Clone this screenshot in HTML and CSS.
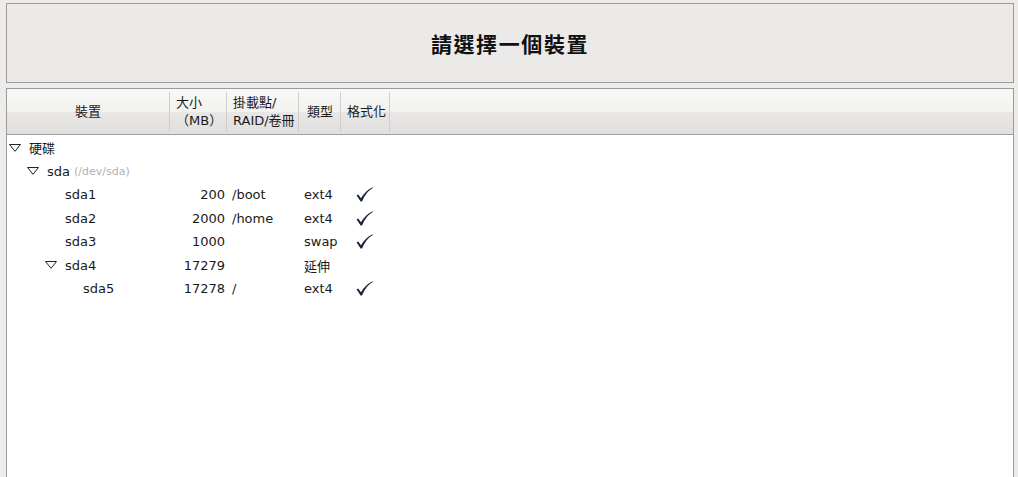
FILE: index.html
```html
<!DOCTYPE html>
<html lang="zh-Hant">
<head>
<meta charset="utf-8">
<link rel="stylesheet" href="styles.css">
</head>
<body>
<div class="title-box"><h1 class="title">請選擇一個裝置</h1></div>
<div class="panel">
  <div class="grid header">
    <div class="hcell c1 center">裝置</div>
    <div class="hcell c2">大小<br>（MB）</div>
    <div class="hcell c3">掛載點/<br>RAID/卷冊</div>
    <div class="hcell c4">類型</div>
    <div class="hcell c5">格式化</div>
    <div class="hfill"></div>
  </div>
  <div class="rows">
  <div class="grid row">
    <div class="tree l0"><span class="exp"><svg class="tri" width="12" height="8" viewBox="0 0 12 8"><polygon points="0.5,0.5 11.5,0.5 6,7.3" fill="#fff" stroke="#222" stroke-width="1"/></svg></span><span class="name">硬碟</span></div>
    <div></div><div></div><div></div><div></div><div></div>
  </div>
  <div class="grid row">
    <div class="tree l1"><span class="exp"><svg class="tri" width="12" height="8" viewBox="0 0 12 8"><polygon points="0.5,0.5 11.5,0.5 6,7.3" fill="#fff" stroke="#222" stroke-width="1"/></svg></span><span class="name">sda</span><span class="dev">(/dev/sda)</span></div>
    <div></div><div></div><div></div><div></div><div></div>
  </div>
  <div class="grid row">
    <div class="tree l2"><span class="exp"></span><span class="name">sda1</span></div>
    <div class="size">200</div><div class="mount">/boot</div><div class="type">ext4</div>
    <div class="fmt"><svg width="17" height="15" viewBox="0 0 17 15"><path d="M0.5,8.2 L2.2,7.4 L5,11.2 C7.5,6.8 11.5,2.6 16.6,0.3 L16.8,0.9 C12.2,3.6 8.8,8 6,14.4 L4.6,14.4 Z" fill="#1c2540"/></svg></div><div></div>
  </div>
  <div class="grid row">
    <div class="tree l2"><span class="exp"></span><span class="name">sda2</span></div>
    <div class="size">2000</div><div class="mount">/home</div><div class="type">ext4</div>
    <div class="fmt"><svg width="17" height="15" viewBox="0 0 17 15"><path d="M0.5,8.2 L2.2,7.4 L5,11.2 C7.5,6.8 11.5,2.6 16.6,0.3 L16.8,0.9 C12.2,3.6 8.8,8 6,14.4 L4.6,14.4 Z" fill="#1c2540"/></svg></div><div></div>
  </div>
  <div class="grid row">
    <div class="tree l2"><span class="exp"></span><span class="name">sda3</span></div>
    <div class="size">1000</div><div class="mount"></div><div class="type">swap</div>
    <div class="fmt"><svg width="17" height="15" viewBox="0 0 17 15"><path d="M0.5,8.2 L2.2,7.4 L5,11.2 C7.5,6.8 11.5,2.6 16.6,0.3 L16.8,0.9 C12.2,3.6 8.8,8 6,14.4 L4.6,14.4 Z" fill="#1c2540"/></svg></div><div></div>
  </div>
  <div class="grid row">
    <div class="tree l2"><span class="exp"><svg class="tri" width="12" height="8" viewBox="0 0 12 8"><polygon points="0.5,0.5 11.5,0.5 6,7.3" fill="#fff" stroke="#222" stroke-width="1"/></svg></span><span class="name">sda4</span></div>
    <div class="size">17279</div><div class="mount"></div><div class="type">延伸</div>
    <div class="fmt"></div><div></div>
  </div>
  <div class="grid row">
    <div class="tree l3"><span class="exp"></span><span class="name">sda5</span></div>
    <div class="size">17278</div><div class="mount">/</div><div class="type">ext4</div>
    <div class="fmt"><svg width="17" height="15" viewBox="0 0 17 15"><path d="M0.5,8.2 L2.2,7.4 L5,11.2 C7.5,6.8 11.5,2.6 16.6,0.3 L16.8,0.9 C12.2,3.6 8.8,8 6,14.4 L4.6,14.4 Z" fill="#1c2540"/></svg></div><div></div>
  </div>
  </div>
</div>
</body>
</html>
```
FILE: styles.css
```css
html, body {
  margin: 0;
  height: 100%;
  overflow: hidden;
}
body {
  background: #edeceb;
  padding: 3px 4px 0 6px;
  box-sizing: border-box;
  font-family: "DejaVu Sans", "Noto Sans CJK TC", sans-serif;
  font-size: 13px;
  color: #1a1a1a;
}
.title-box {
  height: 80px;
  box-sizing: border-box;
  border: 1px solid #9a9a9a;
  background: #ebeae8;
  display: flex;
  align-items: center;
  justify-content: center;
}
.title {
  margin: 0;
  font-family: "Noto Sans CJK TC", sans-serif;
  font-size: 21px;
  letter-spacing: 1.6px;
  font-weight: 700;
  color: #111;
}
.panel {
  margin-top: 5px;
  height: 400px;
  border: 1px solid #9a9a9a;
  border-bottom: none;
  background: #fff;
}
.grid {
  display: grid;
  grid-template-columns: 163px 57px 72px 42px 49px 1fr;
}
.header {
  height: 45px;
  border-bottom: 1px solid #a0a0a0;
  background: linear-gradient(#f8f8f6 0%, #f2f2f0 50%, #e8e7e5 52%, #e1e0de 100%);
}
.hcell {
  display: flex;
  flex-direction: column;
  justify-content: center;
  margin: 3px 0 2px;
  border-right: 1px solid #cfcecc;
  padding-left: 6px;
  line-height: 18px;
  font-family: "DejaVu Sans", "Noto Sans CJK TC", sans-serif;
  font-size: 13px;
  color: #1a1a1a;
  white-space: nowrap;
}
.hcell.center {
  align-items: center;
  padding-left: 0;
}
.hcell.c4 { padding-left: 8px; }
.rows { padding-top: 1px; }
.row {
  height: 23.5px;
  align-items: center;
}
.tree {
  display: flex;
  align-items: center;
  white-space: nowrap;
}
.l0 { padding-left: 0; }
.l1 { padding-left: 18px; }
.l2 { padding-left: 36px; }
.l3 { padding-left: 54px; }
.exp {
  width: 18px;
  flex: none;
  display: flex;
  align-items: center;
}
.tri { margin-left: 2px; margin-top: 0; }
.name { margin-left: 4px; }
.dev {
  margin-left: 4px;
  font-size: 11px;
  color: #b0b0b0;
  margin-top: 1px;
}
.size {
  text-align: right;
  padding-right: 2px;
}
.mount { padding-left: 5px; }
.type { padding-left: 5px; }
.fmt {
  padding-left: 15px;
  display: flex;
  align-items: center;
  height: 15px;
}
```
